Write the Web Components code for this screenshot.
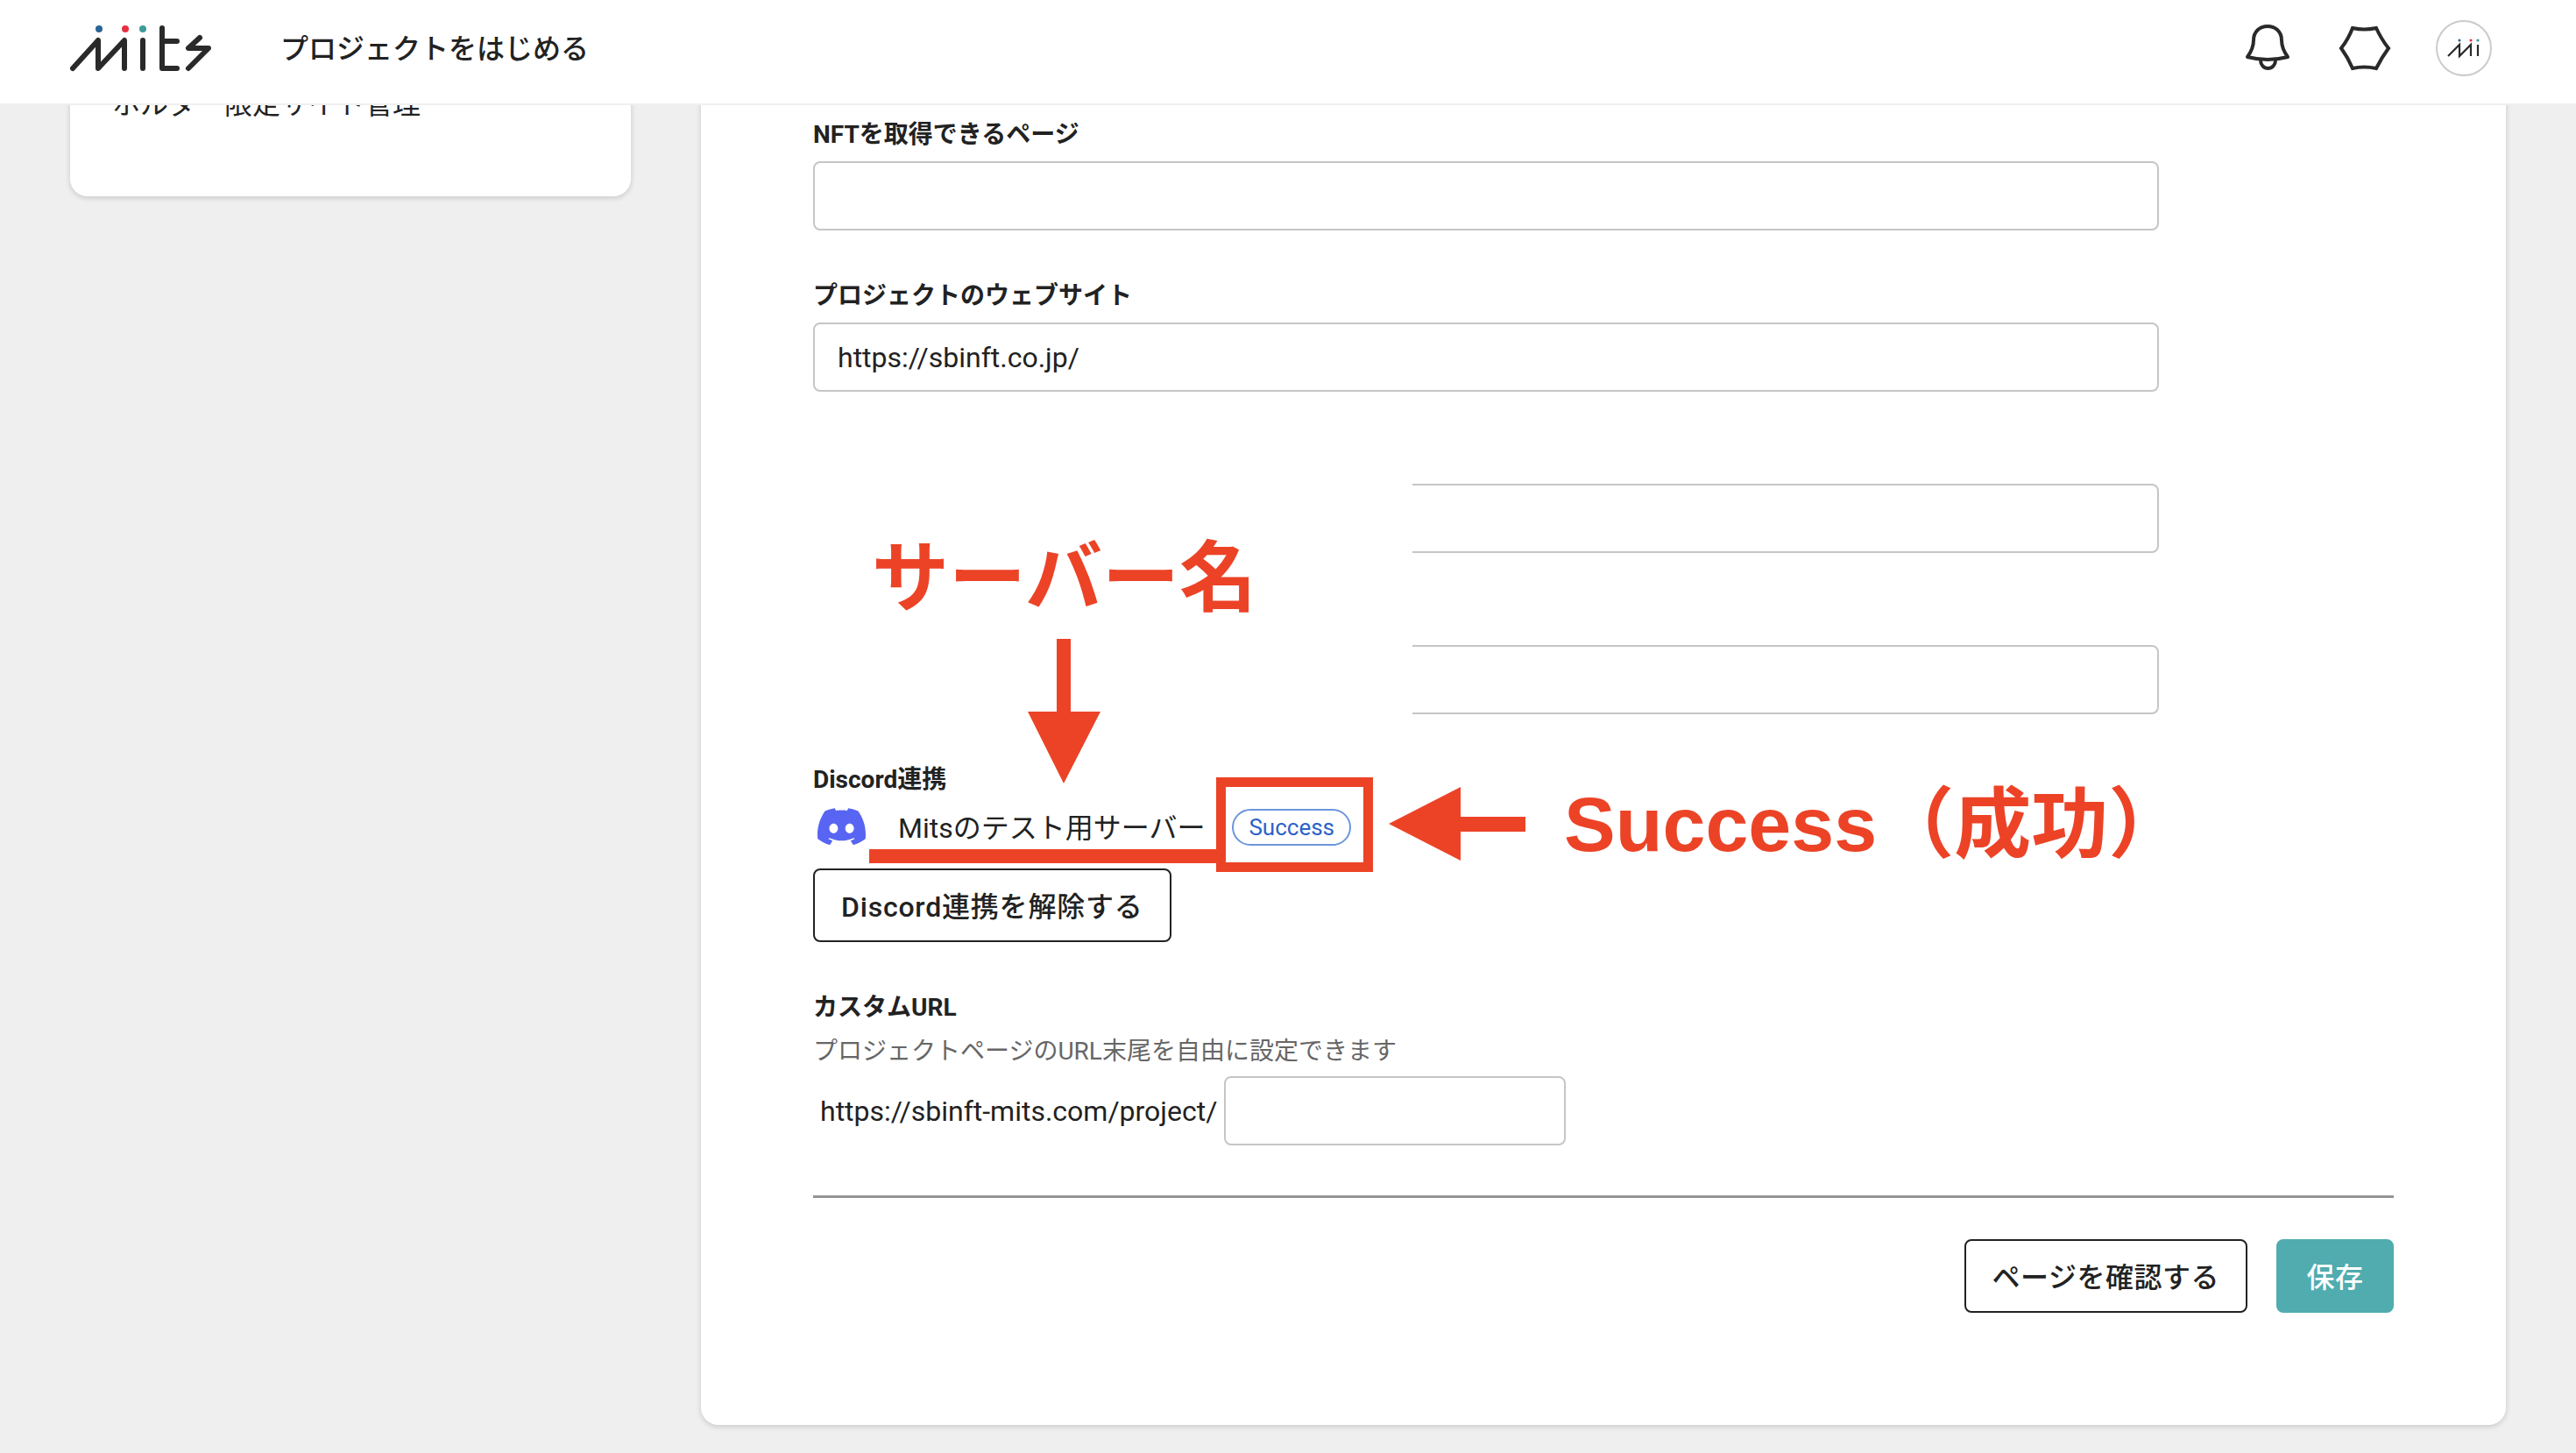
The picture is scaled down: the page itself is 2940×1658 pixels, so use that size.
<!DOCTYPE html>
<html lang="ja">
<head>
<meta charset="utf-8">
<title>Mits</title>
<style>
  html, body { margin: 0; height: 100%; }
  body {
    width: 2940px; height: 1658px; overflow: hidden;
    display: flex; flex-direction: column;
    background: #efefef; color: #222;
    font-family: Roboto, "Noto Sans CJK JP", sans-serif;
  }
</style>
</head>
<body>
  <mits-header>プロジェクトをはじめる</mits-header>
  <mits-stage>
    <mits-sidebar slot="side">ホルダー限定サイト管理</mits-sidebar>
    <mits-panel slot="main">
      <mits-field label="NFTを取得できるページ"><mits-input></mits-input></mits-field>
      <mits-field label="プロジェクトのウェブサイト"><mits-input>https://sbinft.co.jp/</mits-input></mits-field>
      <mits-field><mits-input></mits-input></mits-field>
      <mits-field><mits-input></mits-input></mits-field>
      <mits-field label="Discord連携">
        <mits-discord server="Mitsのテスト用サーバー" status="Success"></mits-discord>
        <mits-button style="letter-spacing: .8px">Discord連携を解除する</mits-button>
      </mits-field>
      <mits-custom-url></mits-custom-url>
      <mits-actions>
        <mits-button>ページを確認する</mits-button>
        <mits-button primary>保存</mits-button>
      </mits-actions>
    </mits-panel>
  </mits-stage>
  <mits-callouts></mits-callouts>

<script>
(function () {
  const LOGO_DOTS = ['#2b6497', '#e5303f', '#3f9a99'];

  class MitsHeader extends HTMLElement {
    connectedCallback() {
      const shadow = this.attachShadow({ mode: 'open' });
      shadow.innerHTML = `
        <style>
          :host {
            display: flex; align-items: center; flex: none;
            height: 118px; padding: 0 96px 0 78px;
            background: #fff; border-bottom: 2px solid #efefef;
            position: relative; z-index: 2;
          }
          .logo { display: block; flex: none; margin-top: -6px; }
          .title { margin-left: 78px; margin-top: -13px; font-size: 32px; font-weight: 500; color: #222; }
          .tools { margin-left: auto; margin-top: -8px; display: flex; align-items: center; }
          .bell { display: block; margin-right: 52px; }
          .hex { display: block; margin-right: 50px; }
          .avatar { display: block; }
        </style>
        <svg class="logo" width="164" height="60" viewBox="78 26 164 60" fill="none">
          <circle cx="113" cy="33" r="4" fill="${LOGO_DOTS[0]}"/>
          <circle cx="143" cy="33" r="4" fill="${LOGO_DOTS[1]}"/>
          <circle cx="163" cy="33" r="4" fill="${LOGO_DOTS[2]}"/>
          <g stroke="#2a2a2a" stroke-width="6" stroke-linecap="round" stroke-linejoin="round">
            <path d="M83 78 L112 46 V78 L142 46 V78"/>
            <path d="M163 46 V78"/>
            <path d="M185 32 V78 H202 M185 47 H202"/>
            <path d="M228 43 L215 55 H238 L215 78"/>
          </g>
        </svg>
        <span class="title"><slot></slot></span>
        <div class="tools">
          <svg class="bell" width="56" height="62" viewBox="0 0 56 62" fill="none" stroke="#2a2a2a" stroke-width="4" stroke-linejoin="round">
            <path d="M5 41 C10 34 12 29 12 22 C12 12 19 6 28 6 C37 6 44 12 44 22 C44 29 46 34 51 41 Q28 47 5 41 Z"/>
            <path d="M20 45 a8.5 9 0 0 0 17 0"/>
          </svg>
          <svg class="hex" width="62" height="54" viewBox="0 0 62 54" fill="none" stroke="#2a2a2a" stroke-width="4" stroke-linejoin="miter">
            <path d="M4 27 Q12 17 17 4 Q30 7 44 4 Q50 17 58 27 Q50 38 44 50 Q30 47 17 50 Q12 38 4 27 Z"/>
          </svg>
          <svg class="avatar" width="64" height="64" viewBox="0 0 64 64" fill="none">
            <circle cx="32" cy="32" r="31" fill="#fff" stroke="#cbcbcb" stroke-width="2"/>
            <circle cx="27" cy="23" r="1.6" fill="${LOGO_DOTS[0]}"/>
            <circle cx="40" cy="23" r="1.6" fill="${LOGO_DOTS[1]}"/>
            <circle cx="48" cy="23" r="1.6" fill="${LOGO_DOTS[2]}"/>
            <path d="M14 41 L27 28 V41 L40 28 V41 M48 28 V41" stroke="#2a2a2a" stroke-width="2.2"/>
          </svg>
        </div>
      `;
    }
  }

  class MitsStage extends HTMLElement {
    connectedCallback() {
      const shadow = this.attachShadow({ mode: 'open' });
      shadow.innerHTML = `
        <style>
          :host {
            display: flex; flex: 1; min-height: 0; overflow: hidden;
            padding: 0 80px; gap: 80px; box-sizing: border-box;
          }
        </style>
        <slot name="side"></slot>
        <slot name="main"></slot>
      `;
    }
  }

  class MitsSidebar extends HTMLElement {
    connectedCallback() {
      const shadow = this.attachShadow({ mode: 'open' });
      shadow.innerHTML = `
        <style>
          :host {
            display: block; flex: none; box-sizing: border-box;
            width: 640px; height: 144px; margin-top: -40px;
            padding: 19px 48px 0;
            background: #fff; border-radius: 0 0 20px 20px;
            box-shadow: 0 2px 6px rgba(0,0,0,.16);
            font-size: 32px; line-height: 40px; color: #222;
          }
        </style>
        <slot></slot>
      `;
    }
  }

  class MitsPanel extends HTMLElement {
    connectedCallback() {
      const shadow = this.attachShadow({ mode: 'open' });
      shadow.innerHTML = `
        <style>
          :host {
            display: flex; flex-direction: column; gap: 51px;
            box-sizing: border-box; flex: none;
            width: 2060px; height: 1546px; margin-top: -40px;
            padding: 50px 128px 0;
            background: #fff; border-radius: 0 0 20px 20px;
            box-shadow: 0 2px 6px rgba(0,0,0,.16);
          }
        </style>
        <slot></slot>
      `;
    }
  }

  class MitsField extends HTMLElement {
    connectedCallback() {
      const label = this.getAttribute('label') || '';
      const shadow = this.attachShadow({ mode: 'open' });
      shadow.innerHTML = `
        <style>
          :host { display: flex; flex-direction: column; align-items: flex-start; }
          .label { height: 44px; line-height: 48px; font-size: 28px; font-weight: 700; color: #222; margin-bottom: 10px; }
        </style>
        <div class="label">${label}</div>
        <slot></slot>
      `;
    }
  }

  class MitsInput extends HTMLElement {
    connectedCallback() {
      const shadow = this.attachShadow({ mode: 'open' });
      shadow.innerHTML = `
        <style>
          :host {
            display: flex; align-items: center; box-sizing: border-box;
            width: var(--input-width, 1536px); height: 79px; padding: 0 26px;
            border: 2px solid #c6c6c6; border-radius: 8px; background: #fff;
            font-size: 32px; color: #222;
          }
        </style>
        <slot></slot>
      `;
    }
  }

  class MitsButton extends HTMLElement {
    connectedCallback() {
      const shadow = this.attachShadow({ mode: 'open' });
      shadow.innerHTML = `
        <style>
          :host {
            display: inline-flex; align-items: center; justify-content: center;
            box-sizing: border-box; height: 84px; padding: 0 30px 3px;
            border: 2px solid #222; border-radius: 8px; background: #fff;
            font-size: 32px; font-weight: 500; letter-spacing: .5px; color: #222; white-space: nowrap;
          }
          :host([primary]) { padding: 0 32.5px 3px; border-color: #50acaf; background: #50acaf; color: #fff; }
        </style>
        <slot></slot>
      `;
    }
  }

  class MitsDiscord extends HTMLElement {
    connectedCallback() {
      const shadow = this.attachShadow({ mode: 'open' });
      shadow.innerHTML = `
        <style>
          :host { display: flex; align-items: center; height: 44px; margin: 2px 0 25px; }
          svg { display: block; margin-left: 5px; margin-top: -2px; }
          .server { margin-left: 37px; padding-bottom: 4px; font-size: 32px; color: #222; }
          .badge {
            margin-left: 31px; box-sizing: border-box; height: 42px; padding: 0 17px;
            display: inline-flex; align-items: center;
            border: 2px solid #6b96da; border-radius: 21px;
            font-size: 26px; color: #2a62c8;
          }
        </style>
        <svg width="55" height="42" viewBox="0 0 24 18.3" preserveAspectRatio="none"><g transform="translate(0,-2.8)"><path fill="#5865f2" d="M20.317 4.3698a19.7913 19.7913 0 00-4.8851-1.5152.0741.0741 0 00-.0785.0371c-.211.3753-.4447.8648-.6083 1.2495-1.8447-.2762-3.68-.2762-5.4868 0-.1636-.3933-.4058-.8742-.6177-1.2495a.077.077 0 00-.0785-.037 19.7363 19.7363 0 00-4.8852 1.515.0699.0699 0 00-.0321.0277C.5334 9.0458-.319 13.5799.0992 18.0578a.0824.0824 0 00.0312.0561c2.0528 1.5076 4.0413 2.4228 5.9929 3.0294a.0777.0777 0 00.0842-.0276c.4616-.6304.8731-1.2952 1.226-1.9942a.076.076 0 00-.0416-.1057c-.6528-.2476-1.2743-.5495-1.8722-.8923a.077.077 0 01-.0076-.1277c.1258-.0943.2517-.1923.3718-.2914a.0743.0743 0 01.0776-.0105c3.9278 1.7933 8.18 1.7933 12.0614 0a.0739.0739 0 01.0785.0095c.1202.099.246.1981.3728.2924a.077.077 0 01-.0066.1276 12.2986 12.2986 0 01-1.873.8914.0766.0766 0 00-.0407.1067c.3604.698.7719 1.3628 1.225 1.9932a.076.076 0 00.0842.0286c1.961-.6067 3.9495-1.5219 6.0023-3.0294a.077.077 0 00.0313-.0552c.5004-5.177-.8382-9.6739-3.5485-13.6604a.061.061 0 00-.0312-.0286zM8.02 15.3312c-1.1825 0-2.1569-1.0857-2.1569-2.419 0-1.3332.9555-2.4189 2.157-2.4189 1.2108 0 2.1757 1.0952 2.1568 2.419 0 1.3332-.9555 2.4189-2.1569 2.4189zm7.9748 0c-1.1825 0-2.1569-1.0857-2.1569-2.419 0-1.3332.9554-2.4189 2.1569-2.4189 1.2108 0 2.1757 1.0952 2.1568 2.419 0 1.3332-.946 2.4189-2.1568 2.4189Z"/></g></svg>
        <span class="server">${this.getAttribute('server')}</span>
        <span class="badge">${this.getAttribute('status')}</span>
      `;
    }
  }

  class MitsCustomUrl extends HTMLElement {
    connectedCallback() {
      const shadow = this.attachShadow({ mode: 'open' });
      shadow.innerHTML = `
        <style>
          :host { display: block; }
          .label { height: 44px; line-height: 48px; font-size: 28px; font-weight: 700; color: #222; }
          .hint { height: 44px; line-height: 48px; margin-top: 6px; font-size: 28px; color: #666; }
          .row { display: flex; align-items: center; margin-top: 8px; --input-width: 390px; }
          .prefix { margin-left: 8px; margin-right: 8px; font-size: 32px; color: #222; }
        </style>
        <div class="label">カスタムURL</div>
        <div class="hint">プロジェクトページのURL末尾を自由に設定できます</div>
        <div class="row">
          <span class="prefix">https://sbinft-mits.com/project/</span>
          <mits-input></mits-input>
        </div>
      `;
    }
  }

  class MitsActions extends HTMLElement {
    connectedCallback() {
      const shadow = this.attachShadow({ mode: 'open' });
      shadow.innerHTML = `
        <style>
          :host {
            display: flex; justify-content: flex-end; gap: 33px;
            margin-top: 6px; padding-top: 47px;
            border-top: 3px solid #949494;
          }
        </style>
        <slot></slot>
      `;
    }
  }

  // red notes drawn on top of the screenshot, their place on the picture is the content
  class MitsCallouts extends HTMLElement {
    connectedCallback() {
      const shadow = this.attachShadow({ mode: 'open' });
      shadow.innerHTML = `
        <style>
          :host { position: absolute; left: 0; top: 0; width: 2940px; height: 1658px; pointer-events: none; z-index: 1; }
          .mask { position: absolute; left: 910px; top: 490px; width: 702px; height: 370px; background: #fff; }
          .note {
            position: absolute; white-space: nowrap; color: #ec4327; font-weight: 700;
            font-family: "Liberation Sans", "Noto Sans CJK JP", sans-serif; line-height: 1;
          }
          .name { left: 995px; top: 616px; font-size: 88px; }
          .result { left: 1785px; top: 897px; font-size: 88px; }
          .box { position: absolute; left: 1388px; top: 887px; width: 179px; height: 108px; box-sizing: border-box; border: 11px solid #ec4327; }
          .rule { position: absolute; left: 992px; top: 969px; width: 396px; height: 16px; background: #ec4327; }
          svg { position: absolute; display: block; }
        </style>
        <div class="mask"></div>
        <div class="note name">サーバー名</div>
        <svg style="left:1173px;top:729px" width="83" height="165" viewBox="0 0 83 165"><path fill="#ec4327" d="M33 0 H49 V83 H83 L41 165 L0 83 H33 Z"/></svg>
        <div class="rule"></div>
        <div class="box"></div>
        <svg style="left:1585px;top:898px" width="156" height="84" viewBox="0 0 156 84"><path fill="#ec4327" d="M0 42 L82 0 V34 H156 V51 H82 V84 Z"/></svg>
        <div class="note result">Success（成功）</div>
      `;
    }
  }

  customElements.define('mits-header', MitsHeader);
  customElements.define('mits-stage', MitsStage);
  customElements.define('mits-sidebar', MitsSidebar);
  customElements.define('mits-panel', MitsPanel);
  customElements.define('mits-field', MitsField);
  customElements.define('mits-input', MitsInput);
  customElements.define('mits-button', MitsButton);
  customElements.define('mits-discord', MitsDiscord);
  customElements.define('mits-custom-url', MitsCustomUrl);
  customElements.define('mits-actions', MitsActions);
  customElements.define('mits-callouts', MitsCallouts);
})();
</script>
</body>
</html>
